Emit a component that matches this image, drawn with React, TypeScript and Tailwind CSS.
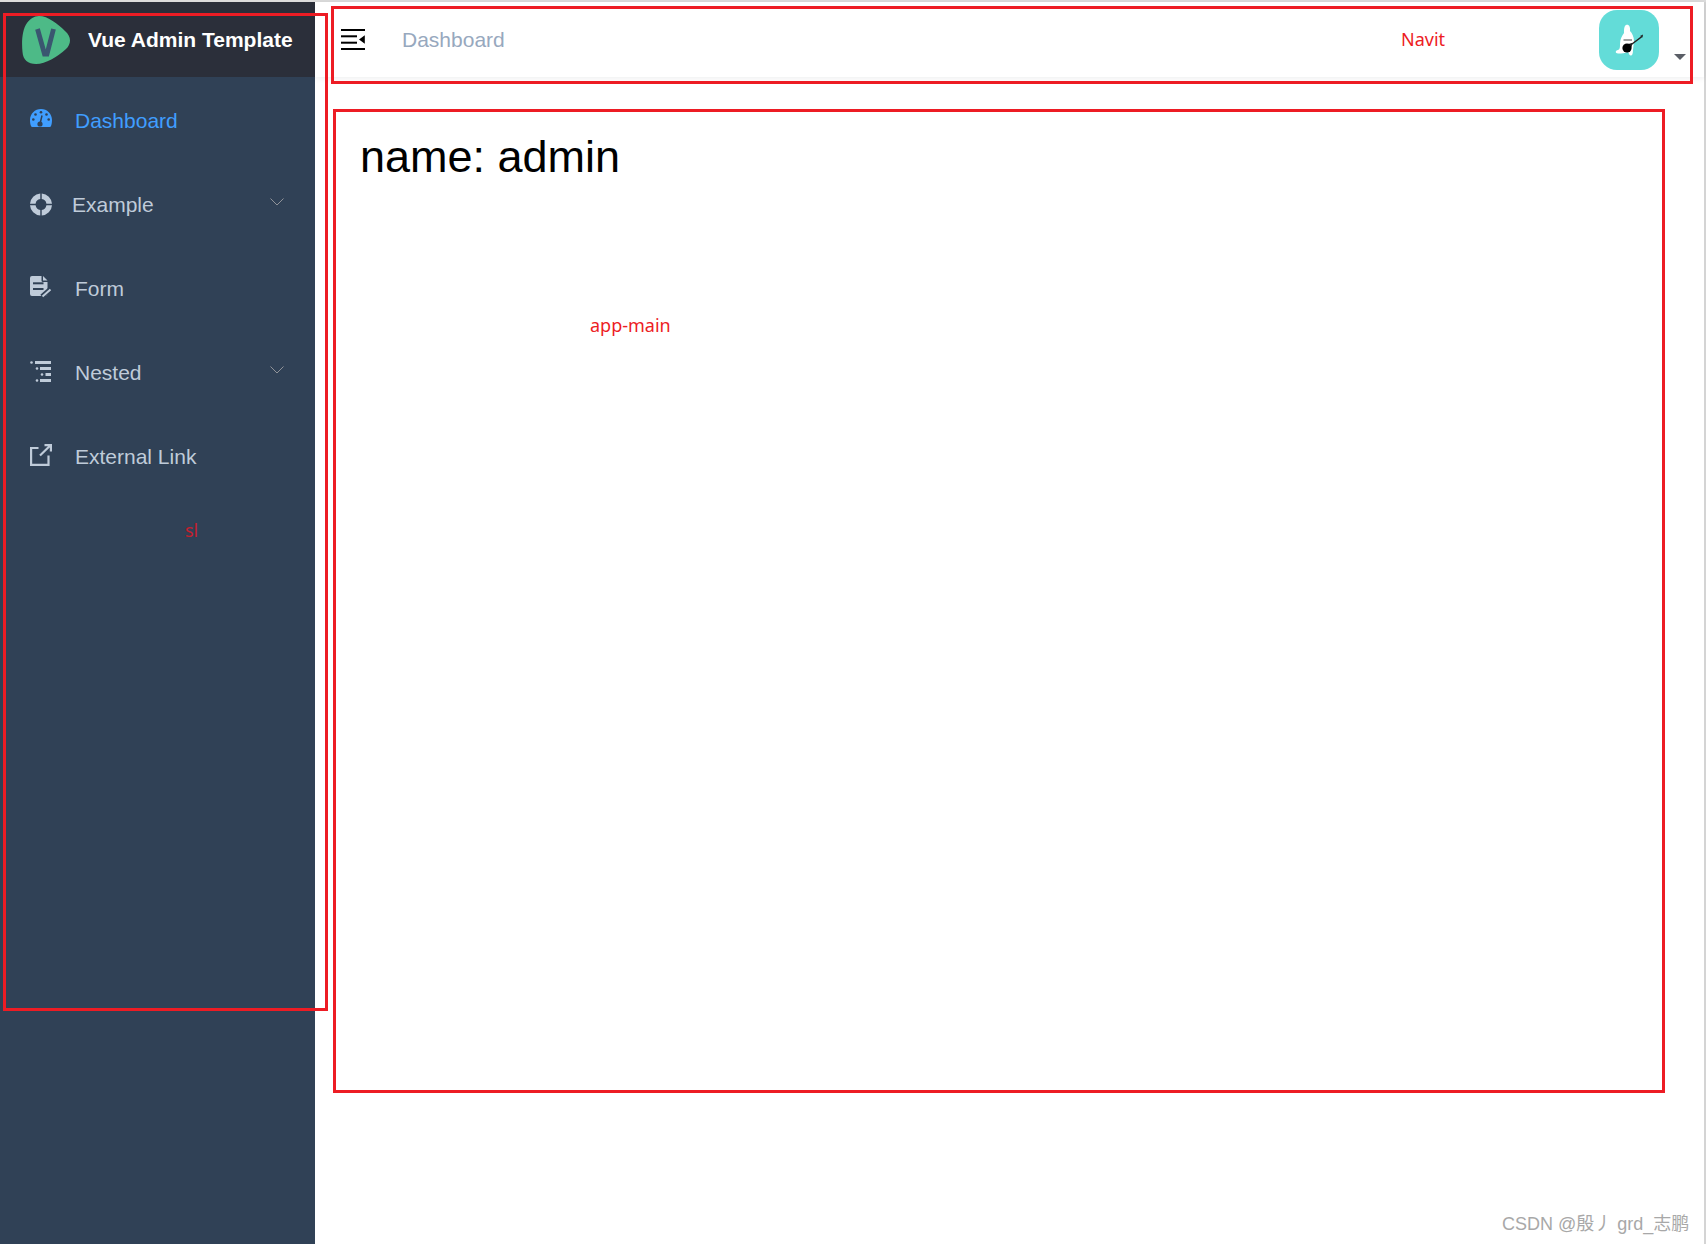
const SANS = "font-['Liberation_Sans',Arial,sans-serif]";
const BG = "#304156";

function Dash() {
  return (
    <svg width="22" height="18" viewBox="0 0 22 18" fill="#409eff">
      <path d="M11 0C4.900 0 0 4.900 0 11c0 2 .3 4.500 1 6q.3 1 1.300 1H19.700q1 0 1.300-1c.7-1.500 1-4 1-6C22 4.900 17.100 0 11 0z" />
      <g fill={BG}>
        <circle cx="11" cy="3.300" r="1.300" />
        <circle cx="5.500" cy="5.500" r="1.300" />
        <circle cx="16.500" cy="5.500" r="1.300" />
        <circle cx="3.300" cy="10.500" r="1.300" />
        <circle cx="18.700" cy="10.500" r="1.300" />
        <circle cx="10" cy="15" r="2.600" />
      </g>
      <path d="M10 15 12 6.500" stroke={BG} strokeWidth="1.500" />
    </svg>
  );
}
function Example() {
  return (
    <svg width="23" height="23" viewBox="0 0 24 24" fill="#bfcbd9">
      <path fillRule="evenodd" d="M11.200 0V6.100A6 6 0 0 0 6.100 11.200H0A12 12 0 0 1 11.200 0zM12.800 0A12 12 0 0 1 24 11.200H17.900A6 6 0 0 0 12.800 6.100V0zM0 12.800H6.100A6 6 0 0 0 11.200 17.900V24A12 12 0 0 1 0 12.800zM17.900 12.800H24A12 12 0 0 1 12.800 24V17.900A6 6 0 0 0 17.900 12.800z" />
    </svg>
  );
}
function FormIcon() {
  return (
    <svg width="22" height="22" viewBox="0 0 22 22" fill="#bfcbd9">
      <path d="M2 0H11.500V4.500Q11.500 6 13 6H17.500V18Q17.500 20 15.500 20H2Q0 20 0 18V2Q0 0 2 0z" />
      <path d="M13 0 17.500 4.500H13z" />
      <rect x="3" y="6.300" width="10.500" height="2" fill={BG} />
      <rect x="3" y="12" width="10.500" height="2" fill={BG} />
      <path d="M12 20.500 20.500 13" stroke={BG} strokeWidth="5" />
      <path d="M12.500 20.500 20.500 13.500" stroke="#bfcbd9" strokeWidth="2" />
    </svg>
  );
}
function Nested() {
  return (
    <svg width="22" height="21" viewBox="0 0 22 21" fill="#bfcbd9">
      <circle cx="1.500" cy="1.500" r="1.300" />
      <rect x="5" y="0" width="16" height="3" />
      <circle cx="7" cy="7.500" r="1.300" />
      <rect x="10" y="6" width="11" height="3" />
      <circle cx="12" cy="13.500" r="1.300" />
      <rect x="15.500" y="12" width="5.500" height="3" />
      <circle cx="7" cy="19.500" r="1.300" />
      <rect x="10" y="18" width="11" height="3" />
    </svg>
  );
}
function Ext() {
  return (
    <svg width="22" height="22" viewBox="0 0 22 22" fill="none" stroke="#bfcbd9" strokeWidth="2.200">
      <path d="M8.500 4H1.100V20.900H18.500V11.500" />
      <path d="M10 11.500 20 1.800M14.500 1.100H20.900V7.500" />
    </svg>
  );
}
function Chevron() {
  return (
    <svg width="14" height="8" viewBox="0 0 14 8" fill="none" stroke="#909399" strokeWidth="1">
      <path d="M.5.500 7 7l6.500-6.500" />
    </svg>
  );
}
function Logo() {
  return (
    <svg width="48" height="48" viewBox="0 0 48 48">
      <path d="M17 0C26 0 36 8 43 15 50 21 49 28 44 33 35 41 24 48 14 48 6 48 1 44 .5 36-.5 26 0 14 5 7 8 3 12 0 17 0z" fill="#4dba87" />
      <path d="M15.500 13 22.500 38H25L31.500 13" fill="none" stroke="#3a5670" strokeWidth="4.800" />
    </svg>
  );
}
function Hamburger() {
  return (
    <svg width="24" height="21" viewBox="0 0 24 21" fill="#000">
      <rect x="0" y="0" width="24" height="2" />
      <rect x="0" y="6.300" width="16" height="2" />
      <rect x="0" y="12.700" width="16" height="2" />
      <rect x="0" y="19" width="24" height="2" />
      <path d="M18 10.500 23.800 6.300V14.700z" />
    </svg>
  );
}
function Rabbit() {
  return (
    <svg width="40" height="40" viewBox="0 0 40 40" className="blur-[0.4px]">
      <path d="M17 5C20 4 21.500 7 21 11 23 13 25 17 25 21L24 30C24 34 23 36 21.500 35.500 20 35 20 33 19 32 16 33 13 33.500 9 33.500 6 33.500 6 30.500 9 30 11 29.500 11 27 11 24 11 19 13 16 15 13 15 10 15 6 17 5z" fill="#fff" />
      <circle cx="18" cy="28" r="4.600" fill="#000" />
      <path d="M17 24.500 23.500 23 21.500 30z" fill="#000" />
      <path d="M21 25.500 33 16.500" stroke="#222" strokeWidth="1.500" />
      <path d="M31 16l3-1.500-.5 3z" fill="#222" />
      <path d="M14.500 20H23" stroke="#444" strokeWidth="1" />
    </svg>
  );
}

const items = [
  { label: "Dashboard", icon: <Dash />, active: true, shift: "-translate-y-[3px]" },
  { label: "Example", icon: <Example />, arrow: true, tight: true, shift: "-translate-y-[1px]" },
  { label: "Form", icon: <FormIcon />, shift: "-translate-y-[2px]" },
  { label: "Nested", icon: <Nested />, arrow: true, shift: "-translate-y-[2px]" },
  { label: "External Link", icon: <Ext />, shift: "-translate-y-[2px]" },
];

function Sidebar() {
  return (
    <aside className="w-[315px] shrink-0 bg-[#304156]">
      <div className="flex h-[75px] items-center bg-[#2b2f3a] pl-[22px]">
        <Logo />
        <span className="ml-[18px] text-[21px] font-bold text-white">Vue Admin Template</span>
      </div>
      <ul className="flex flex-col pt-[2px]">
        {items.map((it) => (
          <li key={it.label} className="flex h-[84px] items-center pl-[30px] pr-[31px]">
            <span className={`flex w-[22px] shrink-0 items-center justify-center ${it.shift}`}>{it.icon}</span>
            <span className={`flex-1 text-[21px] ${it.tight ? "ml-[20px]" : "ml-[23px]"} ${it.active ? "text-[#409eff]" : "text-[#bfcbd9]"}`}>
              {it.label}
            </span>
            {it.arrow && (
              <span className="-translate-y-[3px]">
                <Chevron />
              </span>
            )}
          </li>
        ))}
      </ul>
    </aside>
  );
}

function Navbar() {
  return (
    <header className="flex h-[75px] items-center bg-white pl-[26px] pr-[18px] shadow-[0_1px_6px_rgba(0,21,41,0.08)]">
      <Hamburger />
      <span className="ml-[37px] text-[21px] text-[#97a8be]">Dashboard</span>
      <div className="ml-auto flex items-start">
        <div className="flex h-[60px] w-[60px] items-center justify-center rounded-[18px] bg-[#63dcd8]">
          <Rabbit />
        </div>
        <span className="ml-[15px] mt-[44px] h-0 w-0 border-x-[6px] border-t-[6px] border-x-transparent border-t-[#5a5e66]" />
      </div>
    </header>
  );
}

function Box({ className }: { className: string }) {
  return <div className={`pointer-events-none absolute border-[3px] border-[#ed1c24] ${className}`} />;
}

const YAHEI = "font-['Noto_Sans','Noto_Sans_CJK_SC',sans-serif]";

export default function App() {
  return (
    <div className={`relative flex h-[1244px] flex-col overflow-hidden bg-white ${SANS}`}>
      <div className="h-[2px] shrink-0 bg-[#dcdcdc]" />
      <div className="flex min-h-0 flex-1">
        <Sidebar />
        <main className="flex min-w-0 flex-1 flex-col border-r-2 border-r-[#d4d4d4]">
          <Navbar />
          <section className="pl-[45px] pt-[56px] text-[45px] leading-[48px] text-black">name: admin</section>
        </main>
      </div>

      <Box className="left-[3px] top-[13px] h-[998px] w-[325px]" />
      <Box className="left-[331px] top-[6px] h-[78px] w-[1362px]" />
      <Box className="left-[333px] top-[109px] h-[984px] w-[1332px]" />

      <span className={`absolute left-[1401px] top-[26px] text-[18px] leading-[26px] text-[#ed1c24] ${YAHEI}`}>Navit</span>
      <span className={`absolute left-[590px] top-[312px] text-[18px] leading-[26px] text-[#ed1c24] ${YAHEI}`}>app-main</span>
      <span className={`absolute left-[185px] top-[517px] text-[18px] leading-[26px] text-[#c4202e] ${YAHEI}`}>sl</span>
      <span className="absolute left-[1502px] top-[1212px] font-['Liberation_Sans','Noto_Sans_CJK_SC',sans-serif] text-[18px] leading-[24px] text-[#a8a8a8]">CSDN @殷丿 grd_志鹏</span>
    </div>
  );
}
